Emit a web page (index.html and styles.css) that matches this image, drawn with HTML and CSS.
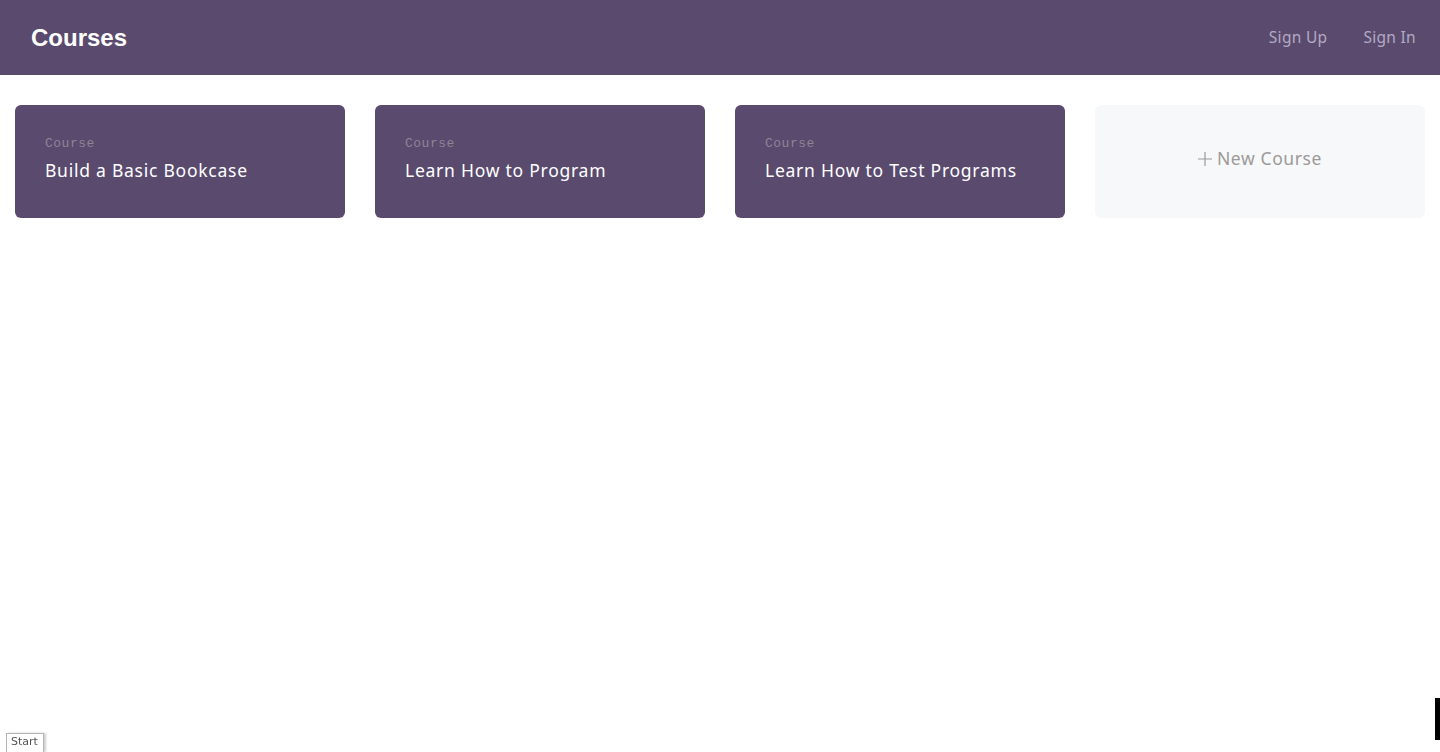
FILE: index.html
```html
<!DOCTYPE html>
<html>
<head>
<meta charset="utf-8">
<link rel="stylesheet" href="styles.css">
</head>
<body>
<header class="topbar">
  <div class="brand">Courses</div>
  <nav class="nav">
    <a class="nav-link" href="#">Sign Up</a>
    <a class="nav-link" href="#">Sign In</a>
  </nav>
</header>
<main class="grid">
  <a class="card" href="#"><span class="card-label">Course</span><span class="card-title">Build a Basic Bookcase</span></a>
  <a class="card" href="#"><span class="card-label">Course</span><span class="card-title">Learn How to Program</span></a>
  <a class="card" href="#"><span class="card-label">Course</span><span class="card-title">Learn How to Test Programs</span></a>
  <a class="card card-new" href="#"><svg class="plus" width="14" height="14" viewBox="0 0 14 14"><path d="M7 0V14M0 7H14" stroke="#9a9a9a" stroke-width="1.2" fill="none"/></svg>New Course</a>
</main>
<div class="start-tab">Start</div>
<div class="edge-widget"></div>
</body>
</html>
```
FILE: styles.css
```css
* { box-sizing: border-box; }
html, body { margin: 0; padding: 0; background: #fff; }
body { font-family: "Noto Sans", "Liberation Sans", sans-serif; }
.topbar {
  height: 75px;
  background: #594a6e;
  display: flex;
  align-items: center;
  justify-content: space-between;
  padding: 0 24px 0 31px;
}
.brand {
  font-family: "Liberation Sans", Arial, sans-serif;
  font-weight: bold;
  font-size: 24px;
  color: #fff;
}
.nav { display: flex; gap: 36px; padding-bottom: 2px; }
.nav-link {
  color: #b3a9c4;
  text-decoration: none;
  font-size: 15.5px;
  letter-spacing: 0.3px;
}
.grid {
  display: grid;
  grid-template-columns: repeat(4, 330px);
  gap: 30px;
  padding: 30px 15px;
}
.card {
  height: 113px;
  border-radius: 6px;
  background: #594a6e;
  padding: 31px 30px 0;
  display: flex;
  flex-direction: column;
  text-decoration: none;
}
.card-label {
  font-family: "Liberation Mono", "DejaVu Sans Mono", monospace;
  font-size: 13px;
  color: #8e8597;
  line-height: 16px;
  letter-spacing: 0.5px;
}
.card-title {
  margin-top: 7px;
  color: #fff;
  font-size: 17.5px;
  line-height: 22px;
  letter-spacing: 0.75px;
}
.card-new {
  background: #f7f8fa;
  padding: 0 0 8px;
  flex-direction: row;
  align-items: center;
  justify-content: center;
  color: #9d9a98;
  font-size: 17.5px;
  letter-spacing: 0.6px;
}
.plus { margin: 3px 5px 0 0; }
.start-tab {
  position: fixed;
  left: 6px;
  bottom: 0;
  height: 19px;
  padding: 1px 5px 0 4px;
  border: 1px solid #b5b5b5;
  border-bottom: none;
  background: #fff;
  font-family: "DejaVu Sans", sans-serif;
  font-size: 11px;
  color: #555;
  box-shadow: 2px 0 2px #d0d0d0;
}
.edge-widget {
  position: fixed;
  right: 0;
  top: 698px;
  width: 5px;
  height: 42px;
  background: #000;
}
```
